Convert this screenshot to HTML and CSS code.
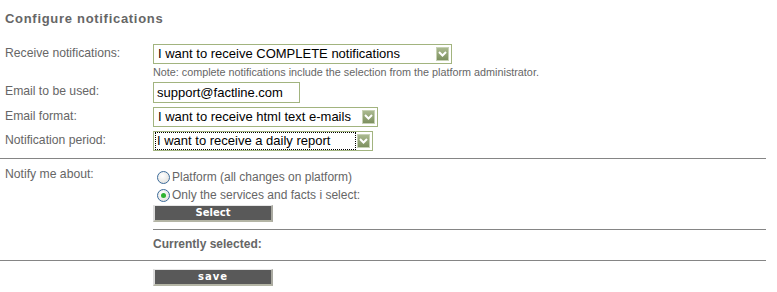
FILE: index.html
```html
<!DOCTYPE html>
<html>
<head>
<meta charset="utf-8">
<link rel="stylesheet" href="styles.css">
</head>
<body>
<div class="page">
  <h1 class="title">Configure notifications</h1>

  <div class="row r-receive">
    <div class="label">Receive notifications:</div>
    <div class="field">
      <div class="select w1"><span class="sel-text">I want to receive COMPLETE notifications</span><span class="arrow"><svg width="9" height="6" viewBox="0 0 9 6"><path d="M1 1 L4.5 4.5 L8 1" fill="none" stroke="#fff" stroke-width="2"/></svg></span></div>
      <div class="note">Note: complete notifications include the selection from the platform administrator.</div>
    </div>
  </div>

  <div class="row r-email">
    <div class="label">Email to be used:</div>
    <div class="field"><div class="input">support@factline.com</div></div>
  </div>

  <div class="row r-format">
    <div class="label">Email format:</div>
    <div class="field">
      <div class="select w2"><span class="sel-text">I want to receive html text e-mails</span><span class="arrow"><svg width="9" height="6" viewBox="0 0 9 6"><path d="M1 1 L4.5 4.5 L8 1" fill="none" stroke="#fff" stroke-width="2"/></svg></span></div>
    </div>
  </div>

  <div class="row r-period">
    <div class="label">Notification period:</div>
    <div class="field">
      <div class="select w3"><span class="sel-text focus">I want to receive a daily report</span><span class="arrow"><svg width="9" height="6" viewBox="0 0 9 6"><path d="M1 1 L4.5 4.5 L8 1" fill="none" stroke="#fff" stroke-width="2"/></svg></span></div>
    </div>
  </div>
</div>

<hr class="rule full r1">

<div class="page">
  <div class="row r-notify">
    <div class="label">Notify me about:</div>
    <div class="field">
      <div class="radio-line"><span class="radio"></span><span>Platform (all changes on platform)</span></div>
      <div class="radio-line"><span class="radio checked"></span><span>Only the services and facts i select:</span></div>
      <div class="btn">Select</div>
    </div>
  </div>
</div>

<hr class="rule indent r2">

<div class="current">Currently selected:</div>

<hr class="rule full r3">

<div class="save-wrap"><div class="btn save">save</div></div>
</body>
</html>
```

FILE: styles.css
```css
html, body {
  margin: 0;
  padding: 0;
  background: #fff;
}
body {
  font-family: "Liberation Sans", Arial, sans-serif;
  font-size: 12px;
  color: #666;
}
.page {
  padding-left: 5px;
}
.title {
  margin: 0;
  padding-top: 12px;
  height: 32px;
  box-sizing: border-box;
  font-size: 13px;
  font-weight: bold;
  letter-spacing: 0.7px;
  line-height: 14px;
  color: #666;
}
.row {
  display: grid;
  grid-template-columns: 148px 1fr;
}
.label {
  line-height: 14px;
  padding-top: 2px;
  font-size: 12.2px;
}
.r-receive { margin-top: 12px; }
.r-email { margin-top: 4px; }
.r-format { margin-top: 4px; }
.r-period { margin-top: 4px; }

.select {
  display: flex;
  align-items: center;
  height: 20px;
  box-sizing: border-box;
  border: 1px solid #a2b47f;
  background: #fff;
  padding: 0 2px 0 2px;
}
.w1 { width: 299px; }
.w2 { width: 225px; }
.w3 { width: 220px; }
.sel-text {
  flex: 1;
  font-size: 13px;
  color: #000;
  line-height: 16px;
  padding-left: 2px;
  white-space: nowrap;
  overflow: hidden;
}
.sel-text.focus {
  outline: 1px dotted #000;
  margin-right: 2px;
  padding-left: 1px;
}
.arrow {
  width: 13px;
  height: 14px;
  box-sizing: border-box;
  border: 1px solid #c7d2b4;
  background: linear-gradient(#aab98f, #7d905f);
  display: flex;
  align-items: center;
  justify-content: center;
}
.note {
  font-size: 10.8px;
  line-height: 12px;
  margin-top: 2px;
  color: #666;
}
.input {
  width: 147px;
  height: 21px;
  box-sizing: border-box;
  border: 1px solid #a2b47f;
  font-size: 13px;
  color: #000;
  line-height: 19px;
  padding-left: 3px;
}

.rule {
  border: 0;
  height: 1px;
  background: #858585;
  margin: 0;
}
.full { width: 766px; }
.indent { width: 613px; margin-left: 153px; }
.r1 { margin-top: 7px; }

.r-notify { margin-top: 7px; }
.r-notify .label { padding-top: 1px; }
.radio-line {
  display: flex;
  align-items: center;
  height: 18px;
  margin-left: 4px;
}
.r-notify .radio-line:first-child { margin-top: 2px; }
.radio {
  width: 11px;
  height: 11px;
  border: 1px solid #3c6b9a;
  border-radius: 50%;
  background: radial-gradient(circle at 40% 35%, #ffffff, #dcdcd8);
  margin-right: 2px;
  position: relative;
  flex: none;
}
.radio.checked::after {
  content: "";
  position: absolute;
  left: 3px;
  top: 3px;
  width: 5px;
  height: 5px;
  border-radius: 50%;
  background: #2fb32f;
}
.btn {
  width: 120px;
  height: 17px;
  box-sizing: border-box;
  background: #595959;
  border-left: 2px solid #dcdcdc;
  border-top: 1px solid #e6e6e6;
  border-right: 2px solid #a9a9a0;
  border-bottom: 2px solid #b4b5a5;
  color: #fff;
  font-family: "DejaVu Sans", Verdana, sans-serif;
  font-weight: bold;
  font-size: 10px;
  line-height: 14px;
  text-align: center;
  margin-top: 1px;
  margin-bottom: 7px;
}
.current {
  margin-left: 153px;
  font-weight: bold;
  font-size: 12px;
  line-height: 14px;
  padding-top: 7px;
  height: 30px;
  box-sizing: border-box;
  color: #666;
}
.save-wrap {
  padding-left: 153px;
  padding-top: 8px;
}
.save { letter-spacing: 1px; margin: 0; }
```
